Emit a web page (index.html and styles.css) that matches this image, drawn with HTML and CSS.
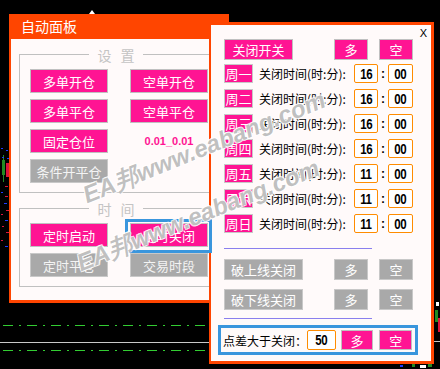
FILE: index.html
```html
<!DOCTYPE html>
<html lang="zh">
<head>
<meta charset="utf-8">
<link rel="stylesheet" href="styles.css">
</head>
<body>
<svg class="chart" width="440" height="369" viewBox="0 0 440 369">
  <line x1="0" y1="325.5" x2="208" y2="325.5" class="dash"/>
  <line x1="0" y1="350.5" x2="208" y2="350.5" class="dash"/>
  <line x1="0" y1="342.5" x2="209" y2="342.5" stroke="#c8c8c8"/>
  <polyline points="9.5,17 9.5,14.5 12,14.5" fill="none" stroke="#fff"/>
  <polygon points="92,10 89,14 95,14" fill="#fff"/>
  <rect x="2" y="160" width="3" height="15" fill="#228b22"/>
  <line x1="3.5" y1="155" x2="3.5" y2="182" stroke="#228b22"/>
  <rect x="6" y="163" width="3" height="14" fill="#dc143c"/>
  <rect x="1" y="148" width="2" height="1" fill="#1e3cff"/>
  <rect x="6" y="150" width="2" height="1" fill="#1e3cff"/>
  <rect x="2" y="157" width="2" height="1" fill="#1e3cff"/>
  <rect x="7" y="158" width="2" height="1" fill="#1e3cff"/>
  <rect x="5" y="186" width="3" height="1" fill="#dc143c"/>
  <rect x="1" y="192" width="2" height="1" fill="#1e3cff"/>
  <rect x="5" y="196" width="3" height="1" fill="#dc143c"/>
  <rect x="4" y="203" width="3" height="1" fill="#1e3cff"/>
  <rect x="6" y="210" width="3" height="1" fill="#dc143c"/>
  <rect x="1" y="214" width="2" height="1" fill="#dc143c"/>
  <rect x="5" y="220" width="3" height="1" fill="#1e3cff"/>
  <rect x="2" y="226" width="2" height="1" fill="#dc143c"/>
  <rect x="6" y="232" width="3" height="1" fill="#dc143c"/>
  <rect x="1" y="240" width="2" height="1" fill="#dc143c"/>
  <rect x="5" y="246" width="3" height="1" fill="#1e3cff"/>
  <rect x="436" y="302" width="3" height="4" fill="#fff"/>
  <rect x="435" y="310" width="3" height="12" fill="#228b22"/>
  <rect x="438" y="318" width="2" height="14" fill="#dc143c"/>
  <line x1="434" y1="341.5" x2="440" y2="341.5" stroke="#c8c8c8"/>
  <rect x="400" y="365" width="3" height="2" fill="#1e3cff"/>
  <rect x="412" y="364" width="3" height="3" fill="#228b22"/>
  <rect x="420" y="365" width="6" height="3" fill="#fff"/>
  <rect x="428" y="364" width="4" height="3" fill="#228b22"/>
</svg>

<div class="win win-left">
  <div class="title">自动面板</div>
  <div class="left-body">
    <div class="group">
      <div class="legend">设 置</div>
      <div class="grid">
        <div class="btn">多单开仓</div>
        <div class="btn">空单开仓</div>
        <div class="btn">多单平仓</div>
        <div class="btn">空单平仓</div>
        <div class="btn">固定仓位</div>
        <div class="lots">0.01_0.01</div>
        <div class="btn gray">条件开平仓</div>
      </div>
    </div>
    <div class="group">
      <div class="legend">时 间</div>
      <div class="grid">
        <div class="btn">定时启动</div>
        <div class="btn">定时关闭</div>
        <div class="btn gray">定时平仓</div>
        <div class="btn gray">交易时段</div>
      </div>
    </div>
  </div>
</div>

<div class="win win-right">
  <div class="close-row"><span class="close">X</span></div>
  <div class="row-top">
    <div class="rbtn wide">关闭开关</div>
    <div class="pair">
      <div class="rbtn sq">多</div>
      <div class="rbtn sq">空</div>
    </div>
  </div>
  <div class="days">
    <div class="day"><span class="tag">周一</span><span class="lbl">关闭时间(时:分):</span><span class="box"><b>16</b></span><span class="colon">:</span><span class="box b2"><b>00</b></span></div>
    <div class="day"><span class="tag">周二</span><span class="lbl">关闭时间(时:分):</span><span class="box"><b>16</b></span><span class="colon">:</span><span class="box b2"><b>00</b></span></div>
    <div class="day"><span class="tag">周三</span><span class="lbl">关闭时间(时:分):</span><span class="box"><b>16</b></span><span class="colon">:</span><span class="box b2"><b>00</b></span></div>
    <div class="day"><span class="tag">周四</span><span class="lbl">关闭时间(时:分):</span><span class="box"><b>16</b></span><span class="colon">:</span><span class="box b2"><b>00</b></span></div>
    <div class="day"><span class="tag">周五</span><span class="lbl">关闭时间(时:分):</span><span class="box"><b>11</b></span><span class="colon">:</span><span class="box b2"><b>00</b></span></div>
    <div class="day"><span class="tag">周六</span><span class="lbl">关闭时间(时:分):</span><span class="box"><b>11</b></span><span class="colon">:</span><span class="box b2"><b>00</b></span></div>
    <div class="day"><span class="tag">周日</span><span class="lbl">关闭时间(时:分):</span><span class="box"><b>11</b></span><span class="colon">:</span><span class="box b2"><b>00</b></span></div>
  </div>
  <div class="divider"></div>
  <div class="grays">
    <div class="row-top">
      <div class="rbtn gray wide2">破上线关闭</div>
      <div class="pair">
        <div class="rbtn gray sq">多</div>
        <div class="rbtn gray sq">空</div>
      </div>
    </div>
    <div class="row-top">
      <div class="rbtn gray wide2">破下线关闭</div>
      <div class="pair">
        <div class="rbtn gray sq">多</div>
        <div class="rbtn gray sq">空</div>
      </div>
    </div>
  </div>
  <div class="divider d2"></div>
  <div class="spread">
    <span class="slbl">点差大于关闭：</span>
    <span class="box sbox"><b>50</b></span>
    <div class="rbtn sq s1">多</div>
    <div class="rbtn sq s2">空</div>
  </div>
</div>

<div class="mark"></div>
<div class="wm wm1">EA邦www.eabang.com</div>
<div class="wm wm2">EA邦www.eabang.com</div>
</body>
</html>
```

FILE: styles.css
```css
* { box-sizing: border-box; margin: 0; padding: 0; }
html, body { width: 440px; height: 369px; overflow: hidden; background: #000; }
body { position: relative; font-family: "Noto Sans CJK SC", "Liberation Sans", sans-serif; }

.chart { position: absolute; left: 0; top: 0; }
.dash { stroke: #32cd32; stroke-dasharray: 10 6 2 6; stroke-dashoffset: -3; }

.win { position: absolute; }

/* left panel */
.win-left {
  left: 9px; top: 14px; width: 220px; height: 289px;
  background: #ff4500; padding: 0 2px 3px;
  display: flex; flex-direction: column;
}
.title { height: 25px; line-height: 25px; color: #fff; font-size: 14px; padding-left: 10px; }
.left-body { flex: 1; background: #fffafa; padding: 15px 8px 0; }
.group { border: 1px solid #c0c0c0; padding: 0 10px 9px; }
.group + .group { margin-top: 15px; }
.legend {
  width: fit-content; margin: -9px auto 0; padding: 0 5px 0 8px;
  background: #fffafa; color: #c4c4c4; font-size: 14px; line-height: 18px; letter-spacing: 3px;
  position: relative; left: -3px;
}
.grid { display: grid; grid-template-columns: 78px 78px; column-gap: 22px; row-gap: 6px; margin-top: 5px; }
.btn {
  height: 24px; display: flex; align-items: center; justify-content: center;
  color: #fff; font-size: 13px; border: 1px solid #c0c0c0; background: #ff1493; white-space: nowrap;
}
.gray { background: #a9a9a9; border-color: #c8c8c8; color: #f4f4f4; }
.lots {
  display: flex; align-items: center; justify-content: center;
  font-family: "Liberation Sans", sans-serif; font-weight: bold; font-size: 11px; color: #ff1493;
}

/* right panel */
.win-right {
  left: 209px; top: 22px; width: 225px; height: 342px;
  background: #fffafa; border: 3px solid #ff4500; border-left-width: 2px;
  padding: 0 18px 0 13px;
  display: flex; flex-direction: column;
}
.close-row { height: 14px; display: flex; justify-content: flex-end; margin-right: -14px; }
.close { font-family: "Liberation Sans", sans-serif; font-size: 11px; line-height: 16px; color: #000; }
.row-top { display: flex; justify-content: space-between; height: 21px; }
.pair { display: flex; gap: 11px; }
.rbtn {
  display: flex; align-items: center; justify-content: center;
  color: #fff; font-size: 13px; background: #ff1493; border: 1px solid #c0c0c0; white-space: nowrap;
}
.rbtn.gray { background: #a9a9a9; border-color: #c8c8c8; }
.wide { width: 69px; }
.wide2 { width: 79px; }
.sq { width: 34px; }

.days { display: flex; flex-direction: column; gap: 6px; margin-top: 4px; }
.day { display: flex; align-items: center; height: 19px; }
.tag {
  width: 29px; height: 19px; background: #ff1493; color: #fff; font-size: 13px;
  display: flex; align-items: center; justify-content: center; border: 1px solid #c8c8c8;
}
.lbl { flex: 1; margin-left: 6px; font-size: 12px; color: #000; white-space: nowrap; }
.box {
  width: 24px; height: 19px; border: 1px solid #ff8c00; border-radius: 2px; background: #fff;
  display: flex; align-items: center; justify-content: center;
}
.box.b2 { width: 25px; }
.box b {
  display: inline-block; font-family: "Liberation Sans", sans-serif; font-weight: bold;
  font-size: 14px; color: #000; transform: scaleX(0.82); letter-spacing: -0.5px;
}
.colon { width: 10px; text-align: center; font-family: "Liberation Sans", sans-serif; font-weight: bold; font-size: 12px; }

.divider { width: 148px; height: 1px; background: #8a7fee; margin-top: 15px; }
.divider.d2 { margin-top: 8px; }
.grays { display: flex; flex-direction: column; gap: 9px; margin-top: 10px; }

.spread {
  margin-top: 6px; margin-left: -6px; width: 200px; height: 30px;
  border: 3px solid #3a96dd; padding: 0 3px 0 2px;
  display: flex; align-items: center;
}
.slbl { flex: 1; font-size: 12px; color: #000; white-space: nowrap; }
.sbox { width: 30px; height: 20px; }
.spread .rbtn { height: 20px; }
.s1 { margin-left: 5px; }
.s2 { margin-left: 6px; }

/* annotation over "定时关闭" */
.mark {
  position: absolute; left: 125px; top: 219px; width: 87px; height: 34px;
  border: 3px solid #3a96dd;
}

/* watermark */
.wm {
  position: absolute; font-family: "Liberation Sans", sans-serif; font-weight: bold; font-style: italic;
  font-size: 24px; line-height: 24px; white-space: nowrap; color: rgba(150, 150, 150, 0.6);
  transform-origin: 0 50%; transform: rotate(-22deg);
  text-shadow: 1px 1px 0 rgba(255,255,255,0.8), -1px -1px 0 rgba(255,255,255,0.8), 1px -1px 0 rgba(255,255,255,0.8), -1px 1px 0 rgba(255,255,255,0.8);
}
.wm1 { left: 84px; top: 184px; }
.wm2 { left: 78px; top: 252px; }
```
